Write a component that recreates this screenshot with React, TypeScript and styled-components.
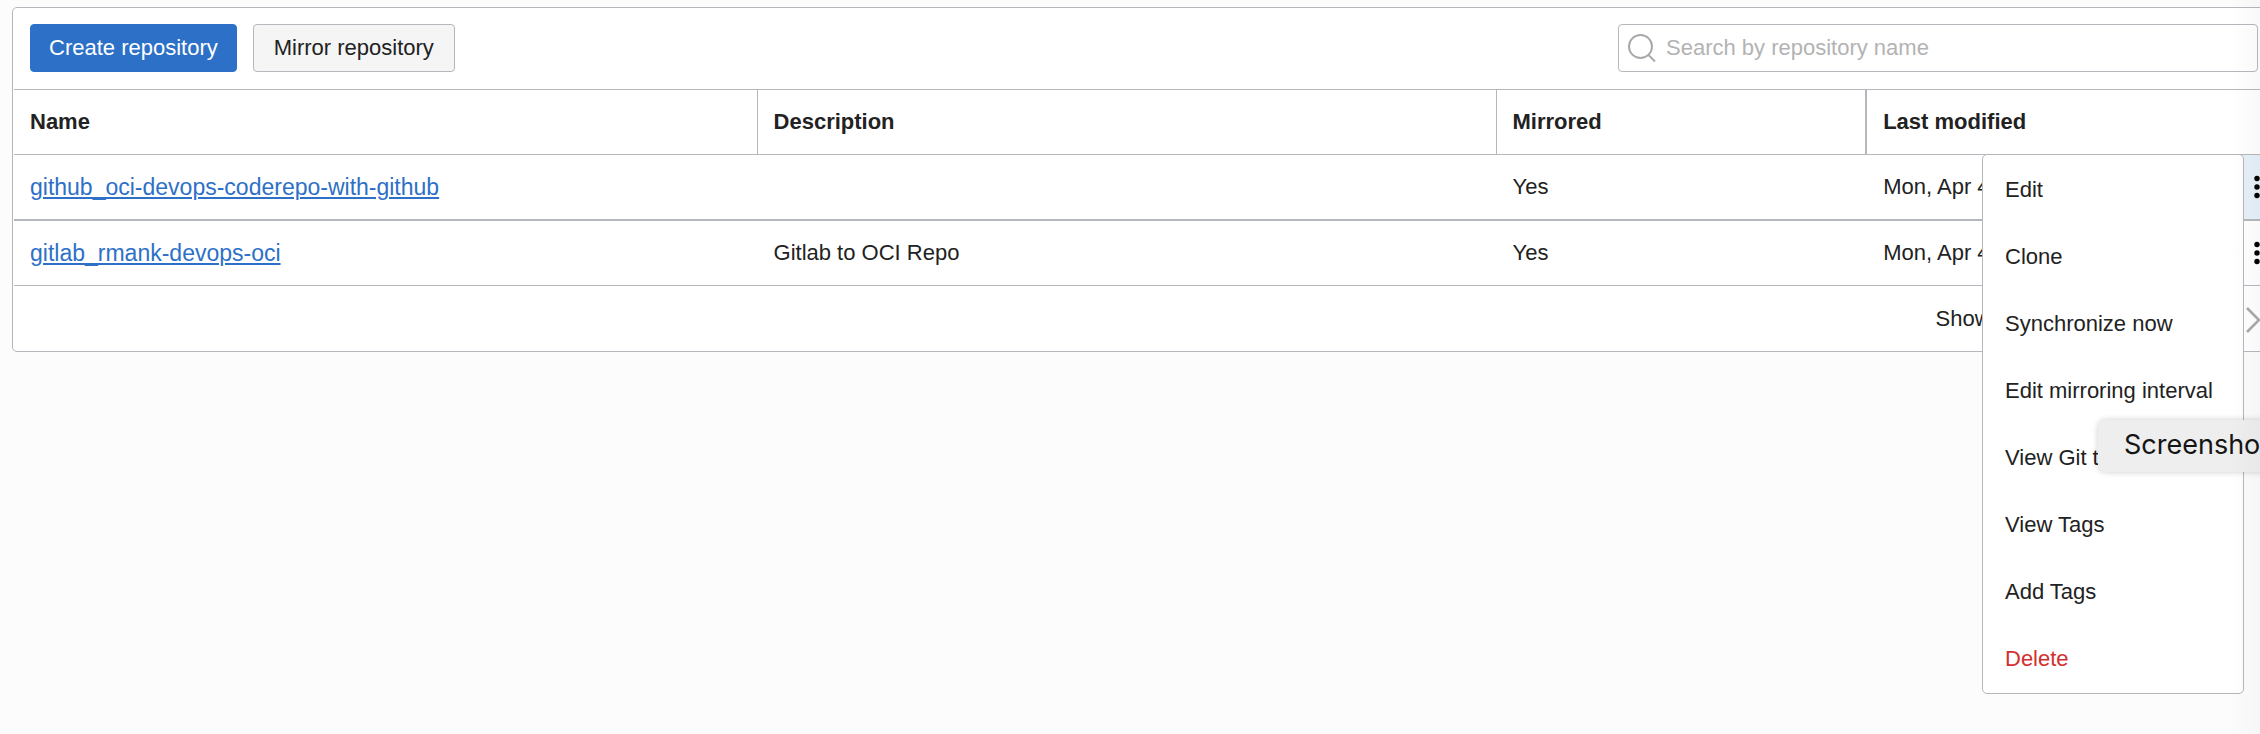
import React from "react";
import styled, { createGlobalStyle } from "styled-components";

const line = "#b4b7bc";
const ink = "#222";
const blue = "#2d70c7";

const GlobalStyle = createGlobalStyle`
  *, *::before, *::after { box-sizing: border-box; }
  body {
    margin: 0;
    background: #fcfcfc;
    color: ${ink};
    font: 22px/28px "Liberation Sans", Arial, sans-serif;
  }
  button, input { font: inherit; color: inherit; }
`;

const Page = styled.main`
  position: relative;
  min-height: 100vh;
  padding: 7px 0 40px 12px;
  overflow: hidden;
`;

const Panel = styled.section`
  margin-right: -16px;
  padding: 0 1px;
  border: 1px solid ${line};
  border-radius: 5px;
  background: #fff;
`;

const Toolbar = styled.div`
  display: flex;
  align-items: center;
  gap: 16px;
  padding: 16px 16px 17px;
  border-bottom: 1px solid ${line};
`;

const Button = styled.button<{ $primary?: boolean }>`
  height: 48px;
  min-width: 202px;
  padding: 0 18px;
  border: 1px solid ${(p) => (p.$primary ? blue : line)};
  border-radius: 4px;
  background: ${(p) => (p.$primary ? blue : "#f5f5f5")};
  color: ${(p) => (p.$primary ? "#fff" : ink)};
  white-space: nowrap;
  cursor: pointer;
`;

const SearchBox = styled.label`
  display: flex;
  align-items: center;
  gap: 10px;
  width: 640px;
  height: 48px;
  margin-left: auto;
  padding: 0 9px;
  border: 1px solid ${line};
  border-radius: 4px;
`;

const SearchInput = styled.input`
  flex: 1;
  min-width: 0;
  padding: 0;
  border: 0;
  outline: 0;
  background: none;
  &::placeholder { color: #b3b3b3; opacity: 1; }
`;

const Table = styled.table`
  width: 100%;
  border-collapse: separate;
  border-spacing: 0;
  table-layout: fixed;
`;

const Col = styled.col<{ $width?: string }>`
  width: ${(p) => p.$width ?? "auto"};
`;

const HeadCell = styled.th<{ $divider?: number }>`
  height: 65px;
  padding: 0 16px;
  border-bottom: 1px solid ${line};
  border-right: ${(p) => p.$divider ?? 0}px solid ${line};
  text-align: left;
`;

const Row = styled.tr<{ $rule: number }>`
  td {
    height: ${(p) => 64 + p.$rule}px;
    border-bottom: ${(p) => p.$rule}px solid ${line};
  }
`;

const Cell = styled.td`
  padding: 0 16px;
  white-space: nowrap;
  overflow: hidden;
`;

const ActionCell = styled.td<{ $open?: boolean }>`
  position: relative;
  padding: 0;
  background: ${(p) => (p.$open ? "#e6f0f8" : "transparent")};
`;

const DotsButton = styled.button`
  display: flex;
  align-items: center;
  justify-content: center;
  width: 100%;
  height: 64px;
  padding: 0;
  border: 0;
  background: none;
  cursor: pointer;
`;

const RepoLink = styled.a`
  color: ${blue};
  font-size: 23px;
  text-decoration: underline;
  text-decoration-thickness: 2px;
  text-underline-offset: 2px;
`;

const Menu = styled.ul`
  position: absolute;
  z-index: 1;
  top: -1px;
  right: 30px;
  width: 262px;
  margin: 0;
  padding: 1px 0;
  border: 1px solid ${line};
  border-radius: 5px;
  background: #fff;
  list-style: none;
`;

const MenuItem = styled.button<{ $danger?: boolean }>`
  display: block;
  width: 100%;
  height: 67px;
  padding: 0 22px;
  border: 0;
  background: none;
  color: ${(p) => (p.$danger ? "#d22f2f" : ink)};
  text-align: left;
  white-space: nowrap;
  cursor: pointer;
`;

const Footer = styled.footer`
  display: flex;
  align-items: center;
  justify-content: flex-end;
  height: 65px;
`;

const Count = styled.span`
  margin-right: 42px;
`;

const PageButton = styled.button`
  display: flex;
  padding: 2px 12px 0;
  border: 0;
  background: none;
  cursor: pointer;
`;

const Tooltip = styled.div`
  position: absolute;
  z-index: 2;
  top: 420px;
  right: -60px;
  width: 222px;
  padding: 0 26px 2px;
  border-radius: 8px;
  background: #eee;
  box-shadow: 0 0 6px rgba(0, 0, 0, 0.2);
  color: #151515;
  font: 27px/50px Inter, sans-serif;
`;

const EdgeShade = styled.div`
  position: absolute;
  z-index: 3;
  top: 0;
  right: 0;
  bottom: 0;
  width: 32px;
  background: linear-gradient(to right, rgba(0, 0, 0, 0), rgba(0, 0, 0, 0.025));
  pointer-events: none;
`;

const SearchIcon = () => (
  <svg width="28" height="28" viewBox="0 0 28 28" fill="none" stroke="#a9a9a9" strokeWidth="2" aria-hidden="true">
    <circle cx="12.5" cy="12.5" r="11.5" />
    <path d="M20.5 21 27 27.5" />
  </svg>
);

const DotsIcon = () => (
  <svg width="6" height="24" viewBox="0 0 6 24" fill="#000" aria-hidden="true">
    <circle cx="3" cy="3.5" r="2.7" />
    <circle cx="3" cy="12" r="2.7" />
    <circle cx="3" cy="20.5" r="2.7" />
  </svg>
);

const Chevron = ({ left }: { left?: boolean }) => (
  <svg width="16" height="26" viewBox="0 0 16 26" fill="none" stroke="#a9a9a9" strokeWidth="2.6" aria-hidden="true">
    <path d={left ? "M15 1 2 13l13 12" : "M1 1l12 12L1 25"} />
  </svg>
);

const repositories = [
  { name: "github_oci-devops-coderepo-with-github", description: "", modified: "Mon, Apr 4, 2022, 15:35:52 UTC", open: true },
  { name: "gitlab_rmank-devops-oci", description: "Gitlab to OCI Repo", modified: "Mon, Apr 4, 2022, 15:33:40 UTC", open: false },
];

const actions = [
  "Edit",
  "Clone",
  "Synchronize now",
  "Edit mirroring interval",
  "View Git tags",
  "View Tags",
  "Add Tags",
  "Delete",
];

export default function App() {
  return (
    <>
      <GlobalStyle />
      <Page>
        <Panel>
          <Toolbar>
            <Button $primary>Create repository</Button>
            <Button>Mirror repository</Button>
            <SearchBox>
              <SearchIcon />
              <SearchInput type="text" aria-label="Search by repository name" placeholder="Search by repository name" />
            </SearchBox>
          </Toolbar>
          <Table>
            <colgroup>
              <Col $width="32.9%" />
              <Col $width="32.7%" />
              <Col $width="16.4%" />
              <Col />
              <Col $width="34px" />
            </colgroup>
            <thead>
              <tr>
                <HeadCell $divider={1}>Name</HeadCell>
                <HeadCell $divider={1}>Description</HeadCell>
                <HeadCell $divider={2}>Mirrored</HeadCell>
                <HeadCell colSpan={2}>Last modified</HeadCell>
              </tr>
            </thead>
            <tbody>
              {repositories.map((repo) => (
                <Row key={repo.name} $rule={repo.open ? 2 : 1}>
                  <Cell>
                    <RepoLink href="#">{repo.name}</RepoLink>
                  </Cell>
                  <Cell>{repo.description}</Cell>
                  <Cell>Yes</Cell>
                  <Cell>{repo.modified}</Cell>
                  <ActionCell $open={repo.open}>
                    <DotsButton aria-label={`Actions for ${repo.name}`}>
                      <DotsIcon />
                    </DotsButton>
                    {repo.open && (
                      <Menu>
                        {actions.map((action) => (
                          <li key={action}>
                            <MenuItem $danger={action === "Delete"}>{action}</MenuItem>
                          </li>
                        ))}
                      </Menu>
                    )}
                  </ActionCell>
                </Row>
              ))}
            </tbody>
          </Table>
          <Footer>
            <Count>Showing 2 items</Count>
            <PageButton aria-label="Previous page">
              <Chevron left />
            </PageButton>
            <span>1 of 1</span>
            <PageButton aria-label="Next page">
              <Chevron />
            </PageButton>
          </Footer>
        </Panel>
        <Tooltip role="tooltip">Screenshot</Tooltip>
        <EdgeShade />
      </Page>
    </>
  );
}
